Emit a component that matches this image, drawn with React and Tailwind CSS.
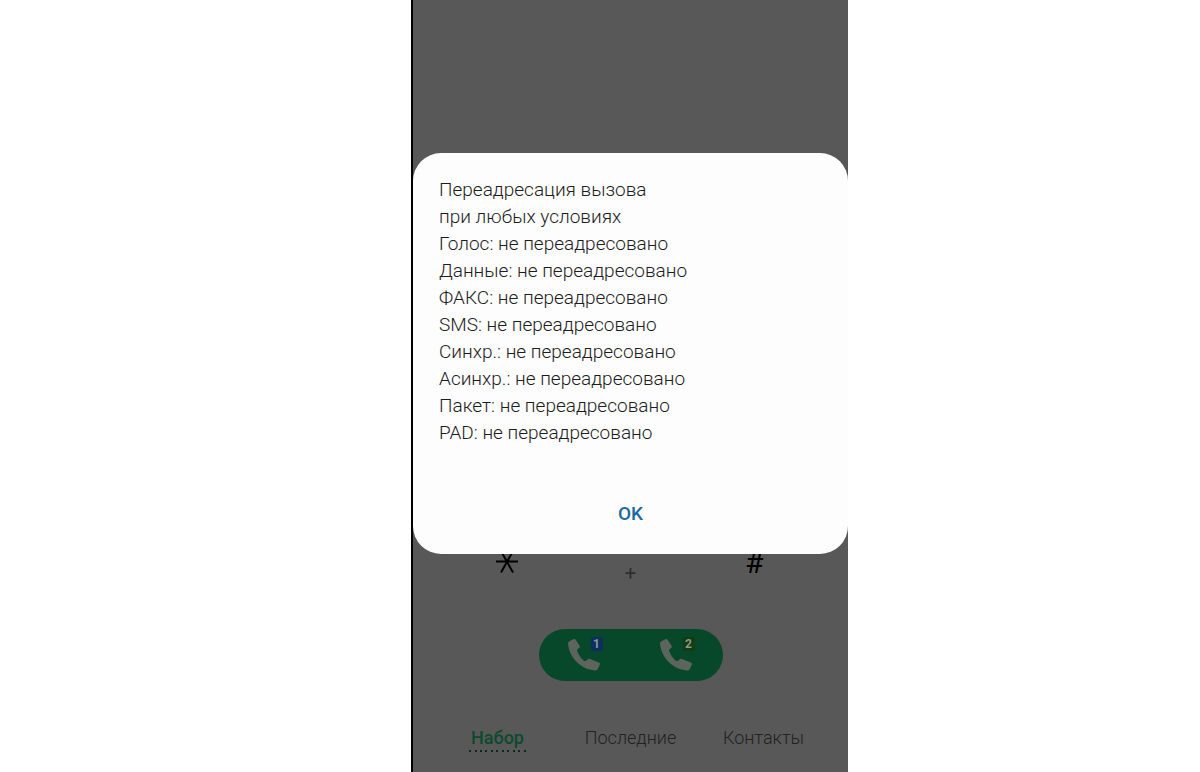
import { useState } from "react";

const statuses = [
  { name: "Голос", value: "не переадресовано" },
  { name: "Данные", value: "не переадресовано" },
  { name: "ФАКС", value: "не переадресовано" },
  { name: "SMS", value: "не переадресовано" },
  { name: "Синхр.", value: "не переадресовано" },
  { name: "Асинхр.", value: "не переадресовано" },
  { name: "Пакет", value: "не переадресовано" },
  { name: "PAD", value: "не переадресовано" },
];

const tabs = ["Набор", "Последние", "Контакты"];

const StarIcon = () => (
  <svg
    viewBox="0 0 22 24"
    className="h-6 w-[22px]"
    fill="none"
    stroke="currentColor"
    strokeWidth="2"
    aria-hidden="true"
  >
    <path d="M0 12.5H22M5 2L17 23.5M17 2L5 23.5" />
  </svg>
);

const PhoneIcon = () => (
  <svg viewBox="0 0 32 32" className="h-8 w-8" fill="currentColor" aria-hidden="true">
    <path d="M1.4 2.2L5.4.3C6.4-.1 7.2.1 7.8 1L11.4 6.6C11.9 7.5 11.8 8.3 11.1 8.9L9.6 10.2C9 10.8 8.9 11.5 9.3 12.4C10.5 15.6 12.8 18.8 15.6 21.4C16.5 22.2 17.3 22.3 18.1 21.7L19.8 20.3C20.4 19.8 21.1 19.7 21.9 20L30.9 23.6C31.9 24 32.2 24.8 31.8 25.7L29.9 29.7C29.3 31 28.4 31.5 27 31.4C20.6 31 13.6 28.2 8.5 22.8C3.6 17.6.5 11.2.1 5C0 3.5.4 2.7 1.4 2.2Z" />
  </svg>
);

const CallButton = ({ sim, badge }) => (
  <button
    aria-label={"SIM " + sim}
    className="relative flex flex-1 items-center justify-center pr-0.5 text-[#5c645d]"
  >
    <PhoneIcon />
    <span
      className={
        "absolute top-2 right-7 flex h-3.5 w-3 items-center justify-center rounded-xs text-xs font-bold " +
        badge
      }
    >
      {sim}
    </span>
  </button>
);

const App = () => {
  const [isOpen, setIsOpen] = useState(true);
  const [activeTab, setActiveTab] = useState("Набор");

  return (
    <div className="flex min-h-screen justify-center bg-white pl-[59px] font-[Roboto,'Liberation_Sans',sans-serif]">
      <main className="relative flex w-full max-w-[437px] flex-col justify-end border-l-2 border-black bg-[#585858]">
        <div className="grid grid-cols-3 px-8 text-black">
          <button aria-label="*" className="flex justify-center pt-2">
            <StarIcon />
          </button>
          <button className="pt-5 text-xl leading-6 text-[#2e2e2e]">+</button>
          <button className="flex justify-center pt-1 text-3xl leading-9">#</button>
        </div>

        <div className="mx-auto mt-11 flex h-[52px] w-[184px] overflow-hidden rounded-full bg-[#08482a]">
          <CallButton sim="1" badge="bg-[#0c2f5e] text-[#8e97a4]" />
          <CallButton sim="2" badge="bg-[#123c12] text-[#8e958c]" />
        </div>

        <nav className="mt-[45px] mb-5 grid grid-cols-3 justify-items-center px-[18px]">
          {tabs.map((tab) => (
            <button
              key={tab}
              onClick={() => setActiveTab(tab)}
              className={
                activeTab === tab
                  ? "flex flex-col text-lg leading-6 font-medium text-[#0c4a30]"
                  : "flex flex-col text-lg leading-6 font-light text-[#222222]"
              }
            >
              <span className="px-0.5">{tab}</span>
              {activeTab === tab && (
                <span className="flex w-full justify-between">
                  {[...Array(11)].map((_, index) => (
                    <span key={index} className="h-0.5 w-0.5 bg-[#0b2a1d]" />
                  ))}
                </span>
              )}
            </button>
          ))}
        </nav>

        {isOpen && (
          <div
            role="dialog"
            aria-label="Переадресация вызова"
            className="absolute inset-x-0 top-[153px] flex flex-col rounded-[28px] bg-[#fdfdfd] px-[26px] pt-[23px] pb-6"
          >
            <div className="text-[19px] leading-[27px] font-light text-[#1c1c1c]">
              <p>Переадресация вызова</p>
              <p>при любых условиях</p>
              {statuses.map((status) => (
                <p key={status.name}>
                  {status.name}: {status.value}
                </p>
              ))}
            </div>
            <button
              onClick={() => setIsOpen(false)}
              className="mx-auto mt-[52px] px-4 py-1 text-[19px] leading-6 font-medium text-[#1a699f]"
            >
              OK
            </button>
          </div>
        )}
      </main>
    </div>
  );
};

export default App;
